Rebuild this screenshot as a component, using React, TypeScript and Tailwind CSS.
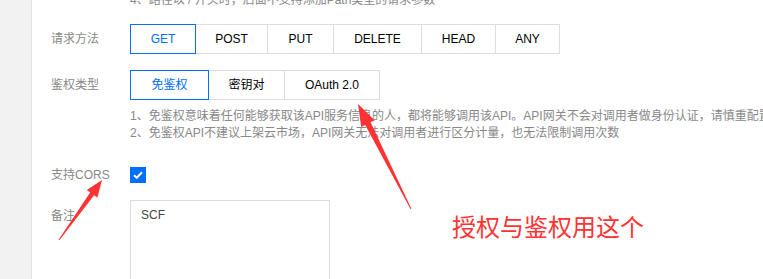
import React from "react";

type Pt = [number, number];

function arrowPoints(tail: Pt, tip: Pt, headLen: number, headW: number, shaftTail: number, shaftHead: number): string {
  const dx = tip[0] - tail[0];
  const dy = tip[1] - tail[1];
  const L = Math.hypot(dx, dy);
  const ux = dx / L;
  const uy = dy / L;
  const nx = -uy;
  const ny = ux;
  const bx = tip[0] - ux * headLen;
  const by = tip[1] - uy * headLen;
  const nb = (len: number, w: number): Pt => [bx + nx * w, by + ny * w];
  const pts: Pt[] = [
    [tail[0] + nx * shaftTail / 2, tail[1] + ny * shaftTail / 2],
    nb(0, shaftHead / 2),
    nb(0, headW / 2),
    tip,
    nb(0, -headW / 2),
    nb(0, -shaftHead / 2),
    [tail[0] - nx * shaftTail / 2, tail[1] - ny * shaftTail / 2],
  ];
  return pts.map((p) => `${p[0].toFixed(1)},${p[1].toFixed(1)}`).join(" ");
}

const font = { fontFamily: '"Liberation Sans", Arial, "Noto Sans CJK SC", sans-serif' };

function Seg({ items, widths, active }: { items: string[]; widths: string[]; active: number }) {
  return (
    <div className="flex h-[30px]">
      {items.map((it, i) => (
        <div
          key={it}
          className={
            "flex items-center justify-center text-[12px] border " +
            widths[i] +
            " " +
            (i === active
              ? "border-[#006eff] text-[#006eff] relative z-10"
              : "border-[#dddddd] text-[#000000] " + (i > 0 ? "-ml-px" : ""))
          }
        >
          {it}
        </div>
      ))}
    </div>
  );
}

export default function App() {
  return (
    <div className="relative w-[763px] h-[279px] overflow-hidden bg-white" style={font}>
      <div className="flex h-full">
        <div className="w-[32px] shrink-0 bg-[#f2f2f2] border-r border-[#e3e3e3]" />
        <div className="flex-1 pl-[19px] flex flex-col">
          <div className="ml-[79px] -mt-[8px] h-[16px] leading-[16px] text-[12px] text-[#888888] whitespace-nowrap">
            4、路径以 / 开头时，后面不支持添加Path类型的请求参数
          </div>
          <div className="mt-[16px] flex items-center">
            <div className="w-[79px] text-[12px] text-[#888888]">请求方法</div>
            <Seg
              items={["GET", "POST", "PUT", "DELETE", "HEAD", "ANY"]}
              widths={["w-[66px]", "w-[73px]", "w-[67px]", "w-[89px]", "w-[75px]", "w-[65px]"]}
              active={0}
            />
          </div>
          <div className="mt-[16px] flex items-center">
            <div className="w-[79px] text-[12px] text-[#888888]">鉴权类型</div>
            <Seg items={["免鉴权", "密钥对", "OAuth 2.0"]} widths={["w-[79px]", "w-[77px]", "w-[96px]"]} active={0} />
          </div>
          <div className="ml-[79px] mt-[8px] text-[12px] leading-[17px] text-[#888888] whitespace-nowrap">
            <div>1、免鉴权意味着任何能够获取该API服务信息的人，都将能够调用该API。API网关不会对调用者做身份认证，请慎重配置</div>
            <div>2、免鉴权API不建议上架云市场，API网关无法对调用者进行区分计量，也无法限制调用次数</div>
          </div>
          <div className="mt-[24px] flex items-center">
            <div className="w-[79px] text-[12px] text-[#888888]">支持CORS</div>
            <div className="w-[16px] h-[16px] bg-[#006eff] flex items-center justify-center">
              <svg width="10" height="8" viewBox="0 0 10 8">
                <path d="M1 4.2 L3.8 6.8 L9 1.3" fill="none" stroke="white" strokeWidth="2" />
              </svg>
            </div>
          </div>
          <div className="mt-[16px] flex items-start">
            <div className="w-[79px] text-[12px] text-[#888888] pt-[7px]">备注</div>
            <div className="w-[200px] h-[100px] border border-[#dddddd] px-[10px] pt-[5px] text-[12px] text-[#444444]">SCF</div>
          </div>
        </div>
      </div>
      <div className="absolute left-[452px] top-[214px] text-[24px] leading-[28px] text-[#ff3333] whitespace-nowrap">
        授权与鉴权用这个
      </div>
      <svg className="absolute left-0 top-0 pointer-events-none" width="763" height="279">
        <polygon points={arrowPoints([411, 209], [358, 104], 22, 15, 1, 6)} fill="#ff3333" />
        <polygon points={arrowPoints([59, 240], [102, 180], 17, 13, 1, 5)} fill="#ff3333" />
      </svg>
    </div>
  );
}
